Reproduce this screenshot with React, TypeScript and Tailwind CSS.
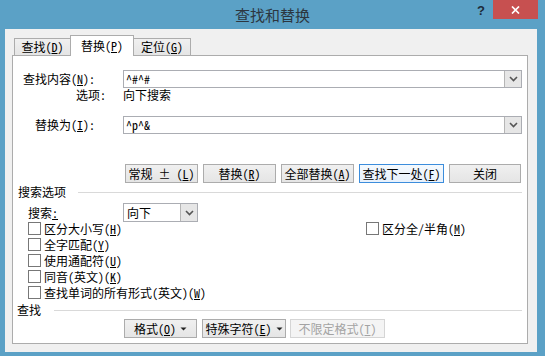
import type { ReactNode } from "react";

const U = ({ c }: { c: string }) => <span className="underline underline-offset-1">{c}</span>;

function Chevron() {
  return (
    <svg width="9" height="6" viewBox="0 0 9 6">
      <path d="M1 1l3.5 3.5L8 1" fill="none" stroke="#555" strokeWidth="1.6" />
    </svg>
  );
}

function Caret() {
  return (
    <svg width="7" height="4" viewBox="0 0 7 4" className="ml-[4px]">
      <path d="M0.5 0.5h6L3.5 3.5z" fill="#222" />
    </svg>
  );
}

function Combo({ value, w }: { value: ReactNode; w: string }) {
  return (
    <div className={`flex h-[18px] border border-[#abadb3] bg-white ${w}`}>
      <div className="flex flex-1 items-center pl-[2px]">{value}</div>
      <div className="flex w-[17px] items-center justify-center border-l border-[#b5b5b5] bg-[#e6e6e6]">
        <Chevron />
      </div>
    </div>
  );
}

function Btn({
  children,
  w,
  focused,
  disabled,
}: {
  children: ReactNode;
  w: string;
  focused?: boolean;
  disabled?: boolean;
}) {
  const look = disabled
    ? "border-[#d5d5d5] bg-[#f4f4f4] text-[#a3a3a3]"
    : focused
      ? "border-[#3c8ddc] bg-linear-to-b from-[#f4f9fe] to-[#e8f1fb]"
      : "border-[#acacac] bg-linear-to-b from-[#f0f0f0] to-[#e5e5e5]";
  return (
    <div className={`flex h-[19px] items-center justify-center border ${look} ${w}`}>
      {children}
    </div>
  );
}

function Check({ children }: { children: ReactNode }) {
  return (
    <div className="flex h-[13px] items-center">
      <div className="h-[13px] w-[13px] border border-[#777] bg-white" />
      <span className="ml-[3px]">{children}</span>
    </div>
  );
}

function Row({ children }: { children: ReactNode }) {
  return <div className="flex h-[16px] items-start pl-[15px]">{children}</div>;
}

export default function App() {
  return (
    <div className="flex h-[356px] w-[545px] flex-col bg-[#5ba1c6] text-[12px] leading-none text-black font-['Noto_Sans_Mono_CJK_SC','Noto_Sans_CJK_SC',sans-serif]">
      {/* title bar */}
      <div className="grid h-[29px] grid-cols-[1fr_auto_1fr]">
        <div />
        <div className="flex items-center text-[15px] text-[#2c3640] font-['Noto_Sans_CJK_SC',sans-serif]">
          查找和替换
        </div>
        <div className="flex items-start justify-end">
          <span className="mt-[4px] text-[13px] font-bold text-[#1d2b38] font-['Liberation_Sans',sans-serif]">?</span>
          <div className="ml-[8px] mr-[7px] flex h-[19px] w-[45px] items-center justify-center bg-[#c75050]">
            <svg width="9" height="8" viewBox="0 0 9 8">
              <path d="M1 0.5l7 7M8 0.5l-7 7" stroke="#fff" strokeWidth="1.7" />
            </svg>
          </div>
        </div>
      </div>

      {/* client */}
      <div className="ml-[5px] mr-[8px] flex h-[323px] flex-col bg-[#f0f0f0]">
        <div className="relative z-10 ml-[9px] mt-[6px] flex h-[21px] items-end">
          <div className="mb-[1px] flex h-[17px] w-[57px] items-center justify-center border border-b-0 border-[#acacac] bg-linear-to-b from-[#f0f0f0] to-[#e5e5e5]">
            查找(<U c="D" />)
          </div>
          <div className="-ml-px flex h-[21px] w-[64px] items-center justify-center border border-b-0 border-[#acacac] bg-white">
            替换(<U c="P" />)
          </div>
          <div className="-ml-px mb-[1px] flex h-[17px] w-[58px] items-center justify-center border border-b-0 border-[#acacac] bg-linear-to-b from-[#f0f0f0] to-[#e5e5e5]">
            定位(<U c="G" />)
          </div>
        </div>

        <div className="-mt-px ml-[7px] flex h-[289px] w-[516px] flex-col border border-[#acacac] bg-white">
          <div className="mt-[14px] flex h-[18px] items-center">
            <div className="w-[110px] pl-[10px]">
              查找内容(<U c="N" />):
            </div>
            <Combo value="^#^#" w="w-[399px]" />
          </div>
          <div className="flex h-[14px] items-center">
            <div className="w-[110px] pr-[17px] text-right">选项:</div>
            <div>向下搜索</div>
          </div>
          <div className="mt-[14px] flex h-[18px] items-center">
            <div className="w-[110px] pl-[22px]">
              替换为(<U c="I" />):
            </div>
            <Combo value="^p^&" w="w-[399px]" />
          </div>

          <div className="ml-[112px] mt-[30px] flex gap-[5px]">
            <Btn w="w-[73px]">
              常规 ± (<U c="L" />)
            </Btn>
            <Btn w="w-[73px]">
              替换(<U c="R" />)
            </Btn>
            <Btn w="w-[73px]">
              全部替换(<U c="A" />)
            </Btn>
            <Btn w="w-[85px]" focused>
              查找下一处(<U c="F" />)
            </Btn>
            <Btn w="w-[72px]">关闭</Btn>
          </div>

          <div className="mt-[1px] flex h-[16px] items-center">
            <span className="ml-[5px]">搜索选项</span>
            <div className="ml-[12px] mr-[5px] h-px flex-1 bg-[#d9d9d9]" />
          </div>

          <div className="mt-[3px] flex h-[19px] items-center">
            <div className="w-[110px] pl-[15px]">
              搜索<U c=":" />
            </div>
            <div className="flex h-[19px] w-[75px] border border-[#abadb3] bg-white">
              <div className="flex flex-1 items-center pl-[3px]">向下</div>
              <div className="flex w-[17px] items-center justify-center border-l border-[#b5b5b5] bg-[#e6e6e6]">
                <Chevron />
              </div>
            </div>
          </div>

          <Row>
            <div className="w-[338px]">
              <Check>
                区分大小写(<U c="H" />)
              </Check>
            </div>
            <Check>
              区分全/半角(<U c="M" />)
            </Check>
          </Row>
          <Row>
            <Check>
              全字匹配(<U c="Y" />)
            </Check>
          </Row>
          <Row>
            <Check>
              使用通配符(<U c="U" />)
            </Check>
          </Row>
          <Row>
            <Check>
              同音(英文)(<U c="K" />)
            </Check>
          </Row>
          <Row>
            <Check>
              查找单词的所有形式(英文)(<U c="W" />)
            </Check>
          </Row>

          <div className="mt-[1px] flex h-[14px] items-center">
            <span className="ml-[4px]">查找</span>
            <div className="ml-[13px] mr-[5px] h-px flex-1 bg-[#d9d9d9]" />
          </div>

          <div className="ml-[111px] mt-[2px] flex">
            <Btn w="w-[73px]">
              格式(<U c="O" />)
              <Caret />
            </Btn>
            <div className="ml-[5px]">
              <Btn w="w-[84px]">
                特殊字符(<U c="E" />)
                <Caret />
              </Btn>
            </div>
            <div className="ml-[4px]">
              <Btn w="w-[95px]" disabled>
                不限定格式(<U c="T" />)
              </Btn>
            </div>
          </div>
        </div>
      </div>
    </div>
  );
}
